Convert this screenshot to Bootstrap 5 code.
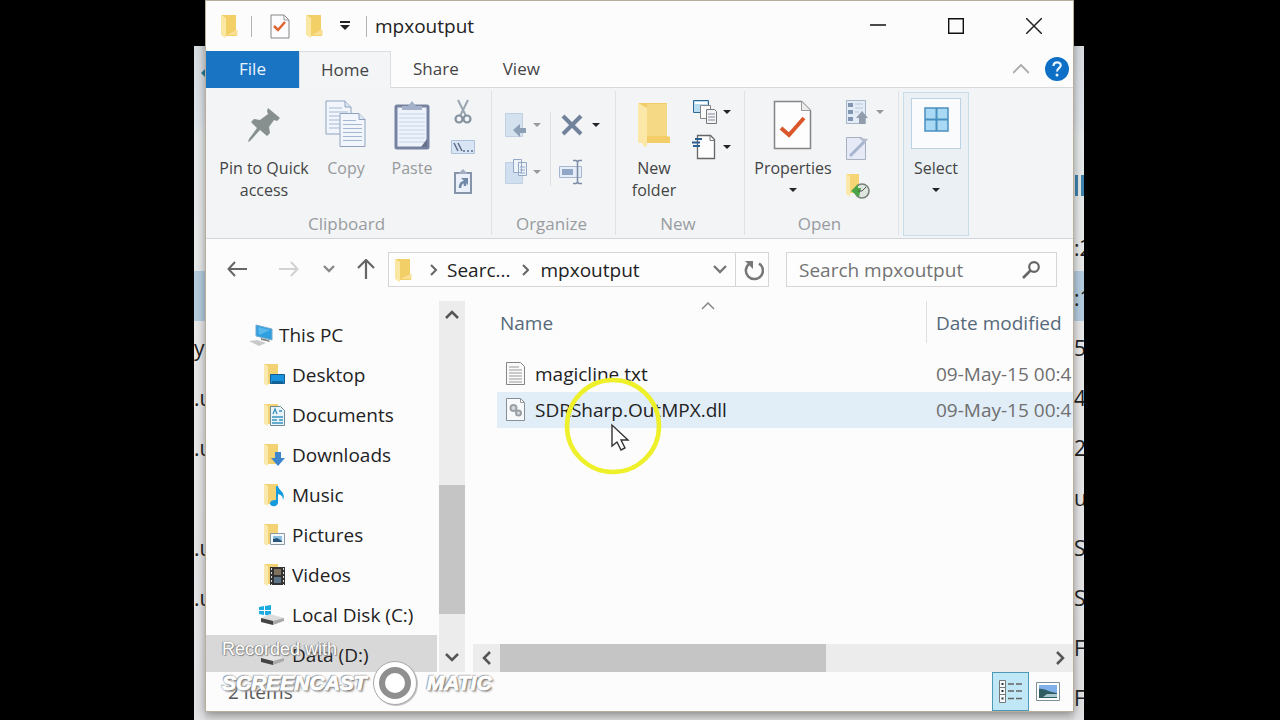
<!DOCTYPE html>
<html lang="en">
<head>
<meta charset="utf-8">
<meta name="viewport" content="width=device-width, initial-scale=1">
<title>mpxoutput</title>
<link href="https://cdn.jsdelivr.net/npm/bootstrap@5.3.0/dist/css/bootstrap.min.css" rel="stylesheet">
<style>
  body { background: #000; font-family: "Open Sans", "Noto Sans", sans-serif; font-size: 19px; line-height: 24px; color: #222; }
  button { font-family: inherit; color: inherit; }
  svg { display: block; flex: none; }
  .plain { background: none; border: 0; padding: 0; }
  .stage { display: grid; grid-template-columns: 11px minmax(0, 1fr) 10px; margin: 0 196px 0 194px; background: linear-gradient(#000 46px, #dcdcdc 46px); }

  /* window behind, visible only at its edges */
  .strip { margin-top: 46px; padding-top: 175px; background: linear-gradient(#d8dde2, #dfe5ea 75px, #e6eaea 90px, #e9e9ea 300px, #e2e2e4); white-space: nowrap; position: relative; }
  .strip > div { height: 50px; line-height: 54px; font-size: 21px; overflow: hidden; }
  .strip .picked { background: #b5cde0; }
  .strip .bars { position: absolute; top: 129px; right: 0; width: 9px; height: 21px; border-left: 3px solid #3f83ad; border-right: 3px solid #3f83ad; }

  .win { background: #fcfcfd; border: 1px solid #b9ad9b; margin-bottom: 9px; box-shadow: 0 3px 9px rgba(0,0,0,.38); position: relative; z-index: 1; min-height: 0; }
  .title-row { height: 50px; padding-left: 13px; }
  .title-row .cap { width: 78px; height: 50px; display: grid; place-items: center; }
  .vline { width: 1px; background: #b4b4b4; height: 21px; }

  .tabs { height: 37px; font-size: 17px; color: #444; position: relative; }
  .tabs .tab { padding: 0 22px; border-bottom: 1px solid #d5d9dc; }
  .tabs .file { width: 93px; padding: 0; background: #1a74c4; color: #e8f3fc; border-color: #1a74c4; }
  .tabs .on { background: #f3f5f7; border: 1px solid #dcdfe2; border-bottom: 0; padding: 0 21px; }

  .ribbon { height: 151px; background: #f2f4f6; border-bottom: 1px solid #d3d5d8; font-size: 16px; line-height: 22px; color: #444; }
  .grp { border-right: 1px solid #dfe2e6; padding: 9px 0 0; margin: 3px 0 0; height: 144px; display: flex; flex-direction: column; justify-content: space-between; }
  .grp-name { font-size: 17px; color: #999c9f; text-align: center; padding-right: 4px; }
  .big { display: flex; flex-direction: column; align-items: center; }
  .big .pic { height: 57px; }
  .dim { color: #97999c; }
  .smalls { display: flex; flex-direction: column; gap: 11px; }
  .smalls button { height: 24px; display: flex; align-items: center; gap: 4px; }
  .wide-gap { gap: 23px; padding-top: 13px; }
  .g1 { width: 286px; padding-left: 6px; }
  .g1 .grp-name { padding-right: 10px; }
  .g2 { width: 124px; }
  .g3 { width: 129px; }
  .g4 { width: 154px; }
  .w104 { width: 104px; } .w60 { width: 60px; } .w72 { width: 72px; } .w88 { width: 88px; }
  .select-box { width: 66px; margin: 4px 0 0 4px; height: 144px; border: 1px solid #c9dde9; background: #ebf0f5; padding-top: 5px; }
  .select-box .tile { width: 50px; height: 51px; background: #f9fbfd; border: 1px solid #b9d3e4; display: grid; place-items: center; padding-bottom: 8px; margin-bottom: 8px; }

  .addr-row { height: 62px; padding: 13px 16px 15px 5px; }
  .addr-row .nav-b { display: grid; place-items: center; height: 34px; }
  .w52 { width: 52px; } .w28 { width: 28px; } .w45 { width: 45px; }
  .boxed { border: 1px solid #d6d6d9; background: #fdfdfe; height: 35px; }
  .searcher { width: 271px; margin-left: 17px; }
  .searcher input { border: 0; outline: 0; background: none; min-width: 0; padding: 0 0 0 12px; color: #555; }
  .searcher input::placeholder { color: #737373; opacity: 1; }

  .body-row { flex: 1 1 0; min-height: 0; }
  .tree { flex: 0 0 233px; padding-top: 14px; overflow: hidden; }
  .tree a { display: flex; align-items: center; flex: none; height: 40px; padding-left: 56px; gap: 6px; color: #222; text-decoration: none; }
  .tree a.root { padding-left: 42px; gap: 5px; }
  .tree a.disk { padding-left: 52px; }
  .tree .sel { background: #d8d8d8; margin-right: 2px; }
  .vbar { flex: 0 0 26px; background: #ececec; }
  .vbar button, .hbar button { height: 28px; display: grid; place-items: center; }
  .hbar button { width: 27px; }
  .thumb { background: #c6c5c6; }
  .lead-space { flex: 155 1 0; } .v-thumb { flex: 129 1 0; } .tail-space { flex: 30 1 0; }
  .hbar { height: 28px; margin-left: 8px; background: #ececec; }
  .h-thumb { flex: 326 1 0; } .h-rest { flex: 220 1 0; }
  .files { flex: 1 1 0; min-width: 0; }
  .files table { width: 100%; table-layout: fixed; }
  .files td, .files th { font-weight: 400; padding: 0; white-space: nowrap; }
  .files th { height: 55px; vertical-align: top; color: #56697a; }
  .files th span { display: block; height: 42px; line-height: 45px; }
  .files th .sorted { position: absolute; top: 1px; left: 204px; }
  .files .c-name { padding-left: 3px; }
  .files .c-date { width: 147px; color: #6f6f6f; overflow: hidden; }
  .files th.c-date { color: #56697a; }
  .files th.c-date span { border-left: 1px solid #dedfe2; }
  .files .c-date span { padding-left: 9px; }
  .files td.c-date span { padding-left: 10px; }
  .files tbody tr { height: 36px; }
  .files .hot { background: #e1edf7; }
  .ring { position: absolute; left: 67px; top: -15px; z-index: 2; }

  .status { height: 39px; padding: 0 7px 0 22px; color: #555; }
  .status .view-b { width: 37px; height: 39px; display: grid; place-items: center; }
  .status .active-view { border: 1px solid #4c9ab8; background: #bfe7f6; }

  .wm { position: absolute; left: 16px; bottom: 4px; z-index: 3; color: #fff; font-family: "Liberation Sans", sans-serif; }
  .wm .top { font-size: 18px; line-height: 20px; text-shadow: 0 0 1px #777, 1px 1px 1px #888, -1px 0 1px #999; }
  .wm .big-name { font-weight: 700; font-style: italic; font-size: 21px; line-height: 48px; text-shadow: 0 0 2px #555, 1px 1px 1px #777, -1px -1px 1px #999, 2px 2px 2px #aaa; -webkit-text-stroke: 1px #fff; }
</style>
</head>
<body>
<svg width="0" height="0" class="position-absolute" aria-hidden="true">
  <defs>
    <symbol id="folder" viewBox="0 0 20 24"><path d="M3 1h14v15l1 1v5H6z" fill="#f3cf68"/><path d="M17 16h1.500v5H8z" fill="#f8df94"/><path d="M2 1l5 3v20l-5-3z" fill="#fbe7a4"/></symbol>
    <symbol id="folder-s" viewBox="0 0 24 24"><path d="M2 1h14v20H4z" fill="#f2d272"/><path d="M2 1l4 2v20l-4-2z" fill="#fae9ae"/></symbol>
    <symbol id="down" viewBox="0 0 10 6"><path d="M1 1h8L5 5z" fill="currentColor"/></symbol>
    <symbol id="sheet" viewBox="0 0 28 36"><path d="M1 1h19l6 6v27H1z" fill="#f2f6fc" stroke="#8fa1bd"/><path d="M20 1v6h6" fill="#dce5f2" stroke="#8fa1bd"/><path d="M4 8h13M4 12h19M4 16h19M4 20h19M4 24h19M4 28h19" stroke="#a5b8d3"/></symbol>
  </defs>
</svg>

<div class="stage vh-100">
  <div class="strip" aria-hidden="true"><svg class="position-absolute" style="top:23px;left:7px" width="4" height="8"><path d="M4 0v8L0 4z" fill="#277b9b"/></svg>
    <div></div><div class="picked"></div><div>y</div><div>.u</div><div>.u</div><div></div><div>.u</div><div>.u</div></div>

  <main class="win d-flex flex-column">
    <header class="title-row d-flex align-items-center">
      <svg width="20" height="24"><use href="#folder"/></svg>
      <span class="vline ms-2 ps-0 ms-2 me-3" style="margin-left:12px!important"></span>
      <button class="plain" aria-label="Properties"><svg width="24" height="25" viewBox="-2 0 24 25"><path d="M1 1h13l5 5v18H1z" fill="#fcfcff" stroke="#858585"/><path d="M14 1v5h5" fill="none" stroke="#999"/><path d="M4 12l4 4 7-8" fill="none" stroke="#df6430" stroke-width="2.500"/></svg></button>
      <button class="plain ms-2 ps-1" aria-label="New folder"><svg width="20" height="24"><use href="#folder"/></svg></button>
      <button class="plain ms-3" aria-label="Customize toolbar"><svg width="10" height="10" viewBox="0 0 10 10"><path d="M0 1h10" stroke="#222" stroke-width="2"/><path d="M0 4h10L5 9z" fill="#222"/></svg></button>
      <span class="vline ms-3"></span>
      <span class="ms-2">mpxoutput</span>
      <div class="d-flex ms-auto">
        <button class="plain cap" aria-label="Minimize"><svg width="16" height="18"><path d="M0 8h16" stroke="#111" stroke-width="1.500"/></svg></button>
        <button class="plain cap" aria-label="Maximize"><svg width="16" height="16"><path d="M.7.700h14.600v14.600H.7z" fill="none" stroke="#111" stroke-width="1.400"/></svg></button>
        <button class="plain cap" aria-label="Close"><svg width="16" height="16"><path d="M0 0l16 16M16 0L0 16" stroke="#222" stroke-width="1.500"/></svg></button>
      </div>
    </header>

    <nav class="tabs d-flex align-items-stretch">
      <button class="plain tab file">File</button>
      <button class="plain tab on">Home</button>
      <button class="plain tab">Share</button>
      <button class="plain tab">View</button>
      <div class="tab flex-grow-1 d-flex justify-content-end align-items-center pe-1">
        <button class="plain me-3" aria-label="Collapse ribbon"><svg width="16" height="10"><path d="M0 9l8-8 8 8" fill="none" stroke="#aaa" stroke-width="1.800"/></svg></button>
        <button class="plain" aria-label="Help"><svg width="24" height="26"><circle cx="12" cy="13" r="12" fill="#0d70c6"/><path d="M8.500 10c0-5 7.500-4.500 7.200-.5C15.500 12 12 12.300 12 15.500" fill="none" stroke="#e8f4ff" stroke-width="2.200"/><circle cx="12" cy="19" r="1.500" fill="#e8f4ff"/></svg></button>
      </div>
    </nav>

    <section class="ribbon d-flex">
      <div class="grp g1">
        <div class="d-flex">
          <button class="plain big w104"><span class="pic"><svg width="36" height="40" viewBox="0 0 36 40" class="mt-1"><path d="M22 4l12 10-3 3-3-1-5 7 1 6-3 3-7-6L4 37l-2 1 1-3 8-11-6-6 3-3 6 1 8-6-1-3z" fill="#87908f"/></svg></span><span>Pin to Quick<br>access</span></button>
          <button class="plain big w60 dim"><span class="pic"><svg width="42" height="50" viewBox="0 0 42 50"><use href="#sheet" width="28" height="36"/><use href="#sheet" x="14" y="12" width="28" height="37"/></svg></span><span>Copy</span></button>
          <button class="plain big w72 dim"><span class="pic"><svg width="38" height="51" viewBox="0 0 38 51"><rect x="3" y="6" width="32" height="42" rx="1" fill="#eef3fb" stroke="#7682a0" stroke-width="3"/><path d="M6 14h26M6 18h26M6 22h26M6 26h26M6 30h26M6 34h26M6 38h26M6 42h26" stroke="#c4d2e8"/><path d="M9 10V6h6l4-5 4 5h6v4z" fill="#a3b1cb"/><path d="M28 47l6-8v8z" fill="#66718c"/></svg></span><span>Paste</span></button>
          <div class="smalls">
            <button class="plain" aria-label="Cut"><svg width="30" height="26" viewBox="0 0 30 26"><path d="M10 1l8 16M20 1l-8 16" stroke="#9aa5b0" stroke-width="2" fill="none"/><circle cx="11" cy="20" r="3.500" fill="none" stroke="#8592a0" stroke-width="2.200"/><circle cx="19" cy="20" r="3.500" fill="none" stroke="#8592a0" stroke-width="2.200"/></svg></button>
            <button class="plain" aria-label="Copy path"><svg width="30" height="16" viewBox="0 0 30 16"><path d="M3.500 1.500h23v13h-23z" fill="#d9e5f5" stroke="#afc2dc"/><path d="M6 4l4 8M10 4l4 8M15 12h2M19 12h2M23 12h2" stroke="#5a6d89" stroke-width="1.500"/></svg></button>
            <button class="plain" aria-label="Paste shortcut"><svg width="30" height="26" viewBox="0 0 30 26"><path d="M7 4h16v20H7z" fill="#e9f0f9" stroke="#8694a9" stroke-width="2"/><path d="M10 5l5-5 5 5z" fill="#a3afc0"/><path d="M12 19c0-5 3-6 5-6v4" fill="none" stroke="#7189a9" stroke-width="2.500"/><path d="M13 9h7v7z" fill="#7189a9"/></svg></button>
          </div>
        </div>
        <div class="grp-name">Clipboard</div>
      </div>

      <div class="grp g2">
        <div class="d-flex">
          <div class="smalls wide-gap ms-2 ps-1 dim">
            <button class="plain" aria-label="Move to"><svg width="24" height="26" viewBox="0 0 24 26"><path d="M1.500 1.500h17v23h-17z" fill="#d4e1ee" stroke="#c0d0e2"/><path d="M9 18l7-6v4h6v5h-6v4z" fill="#8c9fb4"/></svg><svg width="10" height="6"><use href="#down"/></svg></button>
            <button class="plain" aria-label="Copy to"><svg width="24" height="26" viewBox="0 0 24 26"><path d="M1.500 3.500h17v21h-17z" fill="#cfdfef" stroke="#c0d0e2"/><path d="M9.500.500h8v13h-8zM14.500 3.500h8v13h-8z" fill="#eef3fa" stroke="#93a8c5"/><path d="M16 8h5M16 11h5M16 14h5" stroke="#93a8c5"/></svg><svg width="10" height="6"><use href="#down"/></svg></button>
          </div>
          <span class="vline ms-2" style="height:74px;margin-top:12px;background:#dcdfe4"></span>
          <div class="smalls wide-gap ms-2 text-dark">
            <button class="plain" aria-label="Delete"><svg width="24" height="24" viewBox="-1 0 24 24"><path d="M3 3l18 18M21 3L3 21" stroke="#71829b" stroke-width="4"/></svg><svg width="10" height="6" class="ms-1"><use href="#down"/></svg></button>
            <button class="plain" aria-label="Rename"><svg width="24" height="26" viewBox="0 0 24 26"><path d="M.5 7.500h22v11H.5z" fill="#e4edf8" stroke="#a5b6d0"/><path d="M3 10h11v6H3z" fill="#92a7c5"/><path d="M14 1.500h3l1.500 1L20 1.500h3M18.500 2v22M14 24.500h3l1.500-1 1.500 1h3" stroke="#7e8ea6" stroke-width="1.600" fill="none"/></svg></button>
          </div>
        </div>
        <div class="grp-name">Organize</div>
      </div>

      <div class="grp g3">
        <div class="d-flex">
          <button class="plain big w60 ms-2"><span class="pic"><svg width="36" height="50" viewBox="0 0 36 50"><path d="M3 3h28v33l3 1v6H8z" fill="#f2cd68"/><path d="M11 4h20v32H11z" fill="#f6d984"/><path d="M2 3l9 5v38l-3 1-2-4H2z" fill="#fbe8a8"/></svg></span><span>New folder</span></button>
          <div class="smalls ms-2 text-dark">
            <button class="plain" aria-label="New item"><svg width="26" height="26" viewBox="0 0 26 26"><path d="M1.500 1.500h15v12h-15z" fill="#b9dcf1" stroke="#2f6890"/><path d="M3 4h12" stroke="#fff" stroke-width="2"/><path d="M8.500 6.500h10v13h-10z" fill="#fbfbfb" stroke="#888"/><path d="M14.500 10.500h8l2 2v12h-10z" fill="#f2f4f8" stroke="#777"/><path d="M16 15h7M16 18h7M16 21h7" stroke="#889"/></svg><svg width="10" height="6"><use href="#down"/></svg></button>
            <button class="plain" aria-label="Easy access"><svg width="26" height="26" viewBox="0 0 26 26"><path d="M5.500 1.500h13l4 4v19h-17z" fill="#fdfdfd" stroke="#666" stroke-width="1.300"/><path d="M18 1.500v5h5" fill="none" stroke="#777"/><path d="M3 5h7M0 8.500h8M1 12h7" stroke="#2c5f93" stroke-width="1.800"/></svg><svg width="10" height="6"><use href="#down"/></svg></button>
          </div>
        </div>
        <div class="grp-name">New</div>
      </div>

      <div class="grp g4">
        <div class="d-flex">
          <button class="plain big w88 ms-1"><span class="pic"><svg width="40" height="50" viewBox="0 0 40 50"><path d="M1.500 1.500h27l9 9v38h-36z" fill="#fdfdfe" stroke="#858585" stroke-width="1.500"/><path d="M28.500 1.500v9h9" fill="#ececec" stroke="#999"/><path d="M8 28l8 7 15-17" fill="none" stroke="#d9572a" stroke-width="4"/></svg></span><span>Properties</span><svg width="10" height="6" class="mt-2 text-dark"><use href="#down"/></svg></button>
          <div class="smalls ms-2 dim">
            <button class="plain" aria-label="Open"><svg width="26" height="26" viewBox="0 0 26 26"><path d="M1.500 1.500h19v23h-19z" fill="#e2ebf6" stroke="#a7b5c6"/><path d="M3 4h5v4H3zM3 11h5v4H3zM3 18h5v4H3z" fill="#8296b2"/><path d="M10 5h8M10 9h8M10 13h4" stroke="#b9c8dc"/><path d="M17 12l6 7h-3v6h-6v-6h-3z" fill="#919dac"/></svg><svg width="10" height="6"><use href="#down"/></svg></button>
            <button class="plain" aria-label="Edit"><svg width="26" height="26" viewBox="0 0 26 24"><path d="M1.500 2.500h15l4 4v18h-19z" fill="#e6eaf6" stroke="#a7b1c1"/><path d="M5 21L20 6" stroke="#a9b4d1" stroke-width="3"/><path d="M14 3l9 1-3 4z" fill="#b3bccb"/></svg></button>
            <button class="plain mt-1" aria-label="History"><svg width="26" height="26" viewBox="0 0 26 26"><path d="M1 1h13v19H3z" fill="#f5d574"/><path d="M1 1l4 2v21l-4-3z" fill="#fbe9ab"/><circle cx="17" cy="18" r="7" fill="#dfe5df" stroke="#77827a" stroke-width="1.600"/><path d="M6 18l7-7v4h3l-2 9z" fill="#4aa547"/><path d="M17 18l4-4M17 18h-4" stroke="#555"/></svg></button>
          </div>
        </div>
        <div class="grp-name">Open</div>
      </div>

      <button class="plain big select-box"><span class="tile"><svg width="25" height="25" viewBox="0 0 25 25"><path d="M1 1h23v23H1z" fill="#a9d9f5" stroke="#4a90be" stroke-width="1.500"/><path d="M12.500 1v23M1 12.500h23" stroke="#4a90be" stroke-width="2"/></svg></span><span>Select</span><svg width="10" height="6" class="mt-2 text-dark"><use href="#down"/></svg></button>
    </section>

    <div class="addr-row d-flex">
      <button class="plain nav-b w52" aria-label="Back"><svg width="20" height="16"><path d="M20 8H2M8 1L1.500 8 8 15" fill="none" stroke="#666" stroke-width="2"/></svg></button>
      <button class="plain nav-b w52" aria-label="Forward"><svg width="20" height="16"><path d="M0 8h18M12 1l6.500 7L12 15" fill="none" stroke="#d2d2d2" stroke-width="2"/></svg></button>
      <button class="plain nav-b w28" aria-label="Recent"><svg width="12" height="8"><path d="M1 1l5 5 5-5" fill="none" stroke="#8a8a8a" stroke-width="2.400"/></svg></button>
      <button class="plain nav-b w45" aria-label="Up"><svg width="18" height="20"><path d="M9 20V2M1 9l8-8 8 8" fill="none" stroke="#666" stroke-width="2.200"/></svg></button>
      <div class="boxed d-flex align-items-center flex-grow-1">
        <svg width="20" height="24" class="ms-1"><use href="#folder"/></svg>
        <svg width="10" height="12" class="ms-3"><path d="M2 1l5 5-5 5" fill="none" stroke="#666" stroke-width="2"/></svg>
        <button class="plain ms-2">Searc...</button>
        <svg width="10" height="12" class="ms-2 me-1"><path d="M4 1l5 5-5 5" fill="none" stroke="#666" stroke-width="2"/></svg>
        <button class="plain ms-2">mpxoutput</button>
        <button class="plain ms-auto me-2" aria-label="Previous locations"><svg width="14" height="10"><path d="M1 1l6 6 6-6" fill="none" stroke="#777" stroke-width="2.400"/></svg></button>
        <span class="vline h-100" style="background:#d6d6d9"></span>
        <button class="plain px-1 ms-1" aria-label="Refresh"><svg width="20" height="22" viewBox="0 0 20 22"><path d="M15 4.500A8.500 8.500 0 1 1 5 5" fill="none" stroke="#777" stroke-width="2.500"/><path d="M1 2h8v8z" fill="#777"/></svg></button>
      </div>
      <form class="boxed searcher d-flex align-items-center">
        <input class="flex-grow-1" type="search" placeholder="Search mpxoutput" aria-label="Search mpxoutput">
        <button type="button" class="plain me-3" aria-label="Search"><svg width="18" height="18"><circle cx="12" cy="6" r="4.800" fill="none" stroke="#666" stroke-width="2.200"/><path d="M8.500 9.500L1 17" stroke="#666" stroke-width="2.600"/></svg></button>
      </form>
    </div>

    <div class="body-row d-flex">
      <nav class="tree d-flex flex-column">
        <a class="root" href="#"><svg width="26" height="24" viewBox="0 0 26 24"><path d="M8 2l16 4v11L8 13z" fill="#2f9fe0" stroke="#77aacb"/><path d="M10 4l12 3-11 5z" fill="#5bb8ec"/><path d="M13 15l8 2 1 2-9-2z" fill="#888"/><path d="M1 18l8-1 9 3-7 3z" fill="#c9c9c9"/></svg>This PC</a>
        <a href="#"><svg width="24" height="24"><use href="#folder-s"/><path d="M8.500 11.500h14v9h-14z" fill="#1b92dd" stroke="#155d8e"/><path d="M10 19h11" stroke="#06385c"/></svg>Desktop</a>
        <a href="#"><svg width="24" height="24"><use href="#folder-s"/><path d="M8.500 3.500h10l4 4v15h-14z" fill="#eaf5fa" stroke="#6f8a95"/><path d="M11 11l2-5 2 5M17 8h3M10 14h11M10 17h5M17 17h4M10 20h11" stroke="#3a94bd" fill="none" stroke-width="1.300"/></svg>Documents</a>
        <a href="#"><svg width="24" height="24"><use href="#folder-s"/><path d="M13 9h6v6h4l-7 8-7-8h4z" fill="#3d86cd"/></svg>Downloads</a>
        <a href="#"><svg width="24" height="24"><use href="#folder-s"/><path d="M14 3h2c1 5 8 6 5 14 0-4-2-5-5-6v8c0 6-9 5-8 1 1-3 4-3 6-3z" fill="#149ade"/></svg>Music</a>
        <a href="#"><svg width="24" height="24"><use href="#folder-s"/><path d="M8.500 10.500h14v11h-14z" fill="#f1f7fa" stroke="#8c9ba3"/><path d="M11 13h9v6h-9z" fill="#8bbfe0"/><path d="M11 16l4-1 5 3v1h-9z" fill="#29557a"/></svg>Pictures</a>
        <a href="#"><svg width="24" height="24"><use href="#folder-s"/><path d="M8 4h15v18H8z" fill="#333"/><path d="M12 6h7v6h-7z" fill="#7e725e"/><path d="M12 14h7v6h-7z" fill="#5c7488"/><path d="M9.500 5v17M21.500 5v17" stroke="#ddd" stroke-dasharray="2 2"/></svg>Videos</a>
        <a class="disk" href="#"><svg width="28" height="24" viewBox="0 0 28 24"><path d="M1 4l5-1v4H1zM7 3l6-1v5H7zM1 8h5v4l-5-1zM7 8h6v5l-6-1z" fill="#1cabdf"/><path d="M3 15l9-4 14 4-11 6z" fill="#dcdcdc"/><path d="M3 15l12 3v4L3 19z" fill="#444"/><path d="M15 18l11-3v3l-11 4z" fill="#aaa"/></svg>Local Disk (C:)</a>
        <a class="disk sel" href="#"><svg width="28" height="24" viewBox="0 0 28 24"><path d="M3 15l9-4 14 4-11 6z" fill="#e4e4e4"/><path d="M3 15l12 3v4L3 19z" fill="#444"/><path d="M15 18l11-3v3l-11 4z" fill="#aaa"/></svg>Data (D:)</a>
      </nav>
      <div class="vbar d-flex flex-column">
        <button class="plain" aria-label="Scroll up"><svg width="14" height="10"><path d="M1 8l6-6 6 6" fill="none" stroke="#555" stroke-width="2.500"/></svg></button>
        <span class="lead-space"></span><span class="thumb v-thumb"></span><span class="tail-space"></span>
        <button class="plain" aria-label="Scroll down"><svg width="14" height="10"><path d="M1 1l6 6 6-6" fill="none" stroke="#555" stroke-width="2.500"/></svg></button>
      </div>
      <div class="files d-flex flex-column">
        <div class="flex-grow-1 overflow-hidden ps-4">
          <div class="ps-2">
          <table>
            <thead><tr><th class="c-name position-relative"><span>Name</span><svg class="sorted" width="14" height="8"><path d="M1 7l6-6 6 6" fill="none" stroke="#888" stroke-width="1.500"/></svg></th><th class="c-date"><span>Date modified</span></th></tr></thead>
            <tbody>
              <tr><td class="ps-2"><span class="d-flex align-items-center"><svg width="22" height="26" viewBox="0 0 22 26" class="me-2"><path d="M1.500 1.500h14l4 4v18h-18z" fill="#fafafa" stroke="#858585"/><path d="M4 6h10M4 9h13M4 12h13M4 15h13M4 18h13M4 21h13" stroke="#999"/></svg><span>magicline.txt</span></span></td><td class="c-date"><span>09-May-15 00:41</span></td></tr>
              <tr class="hot"><td class="ps-2 position-relative"><span class="d-flex align-items-center"><svg width="22" height="26" viewBox="0 0 22 26" class="me-2"><path d="M1.500 1.500h14l4 4v18h-18z" fill="#f7f9fb" stroke="#858f98"/><path d="M15.500 1.500v4h4" fill="none" stroke="#999"/><circle cx="8.500" cy="11" r="3" fill="#d5dade" stroke="#9aa0a5" stroke-width="2"/><circle cx="13.500" cy="16" r="2.500" fill="#d5dade" stroke="#9aa0a5" stroke-width="2"/></svg><span>SDRSharp.OutMPX.dll</span></span>
                <svg class="ring" width="98" height="98" viewBox="0 0 98 98"><circle cx="49" cy="49" r="46" fill="none" stroke="#eef02a" stroke-width="4.500"/><path d="M48 48v21l5-4 4 8 4-2-4-8h7z" fill="#fdfdfd" stroke="#333" stroke-width="1.400"/></svg>
              </td><td class="c-date"><span>09-May-15 00:41</span></td></tr>
            </tbody>
          </table>
          </div>
        </div>
        <div class="hbar d-flex">
          <button class="plain" aria-label="Scroll left"><svg width="10" height="14"><path d="M8 1L2 7l6 6" fill="none" stroke="#555" stroke-width="2.500"/></svg></button>
          <span class="thumb h-thumb"></span><span class="h-rest"></span>
          <button class="plain" aria-label="Scroll right"><svg width="10" height="14"><path d="M2 1l6 6-6 6" fill="none" stroke="#555" stroke-width="2.500"/></svg></button>
        </div>
      </div>
    </div>

    <footer class="status d-flex align-items-center">
      <span>2 items</span>
      <button class="plain view-b active-view ms-auto" aria-label="Details view"><svg width="25" height="25" viewBox="0 0 25 25"><path d="M1.500 1.500h6v22h-6zM1.500 8.500h6M1.500 15.500h6" fill="#f5fafc" stroke="#777"/><path d="M3.500 5h2M3.500 12h2M3.500 19.500h2" stroke="#333" stroke-width="2"/><path d="M10 5h6M18 5h6M10 12h6M18 12h6M10 19.500h6M18 19.500h6" stroke="#666" stroke-width="1.300"/></svg></button>
      <button class="plain view-b" aria-label="Thumbnail view"><svg width="24" height="20" viewBox="0 0 24 20"><path d="M.5.500h23v18H.5z" fill="#fff" stroke="#7d8f98"/><path d="M3 3h18v13H3z" fill="#7fb0ea"/><path d="M3 7c5-1 9 3 18 4v5H3z" fill="#2f5d62"/><path d="M11 12h10v3H7z" fill="#a9c6cf"/></svg></button>
    </footer>

    <div class="wm">
      <div class="top">Recorded with</div>
      <div class="big-name d-flex align-items-center"><span>SCREENCAST</span><svg width="48" height="48" viewBox="0 0 48 48" class="ms-1"><circle cx="25" cy="25" r="22" fill="#888" opacity=".5"/><circle cx="24" cy="24" r="21.500" fill="#fff" stroke="#aaa"/><circle cx="24" cy="24" r="13" fill="#fff" stroke="#8f8f8f" stroke-width="6"/></svg><span class="ms-2">MATIC</span></div>
    </div>
  </main>

  <div class="strip" aria-hidden="true"><span class="bars"></span>
    <div>:2</div><div class="picked">:1</div><div>5</div><div>4</div><div>2</div><div>u</div><div>Sa</div><div>Sa</div><div>F</div><div>F</div></div>
</div>
<script src="https://cdn.jsdelivr.net/npm/bootstrap@5.3.0/dist/js/bootstrap.bundle.min.js"></script>
</body>
</html>
